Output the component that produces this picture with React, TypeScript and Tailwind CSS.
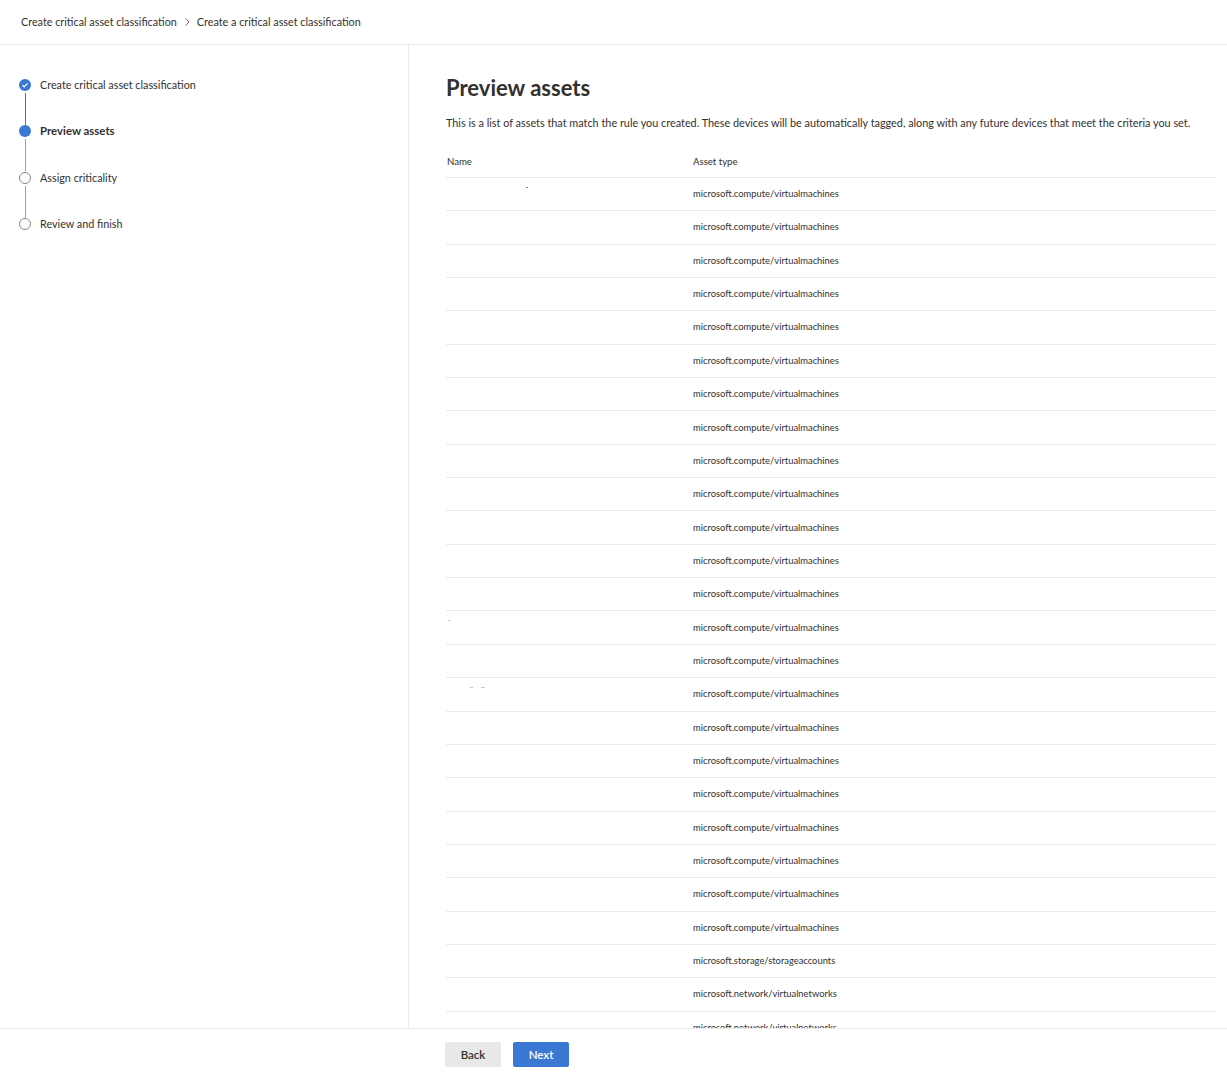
import React from "react";

const rows: string[] = [
  ...Array(23).fill("microsoft.compute/virtualmachines"),
  "microsoft.storage/storageaccounts",
  "microsoft.network/virtualnetworks",
  "microsoft.network/virtualnetworks",
];

function Step({ state, label, line }: { state: "done" | "current" | "todo"; label: string; line?: "blue" | "gray" }) {
  return (
    <div className="relative flex items-start h-[46.3px]">
      <div className="w-[12px] h-[12px] ml-[19px] mt-[1px] flex items-center justify-center shrink-0">
        {state === "done" && (
          <div className="w-[12px] h-[12px] rounded-full bg-[#3b78d4] flex items-center justify-center">
            <svg width="8" height="8" viewBox="0 0 8 8" fill="none">
              <path d="M1.5 4.2 L3.2 5.8 L6.5 2.3" stroke="white" strokeWidth="1.2" />
            </svg>
          </div>
        )}
        {state === "current" && <div className="w-[12px] h-[12px] rounded-full bg-[#3b78d4]" />}
        {state === "todo" && <div className="w-[12px] h-[12px] rounded-full border border-[#8a8886] bg-white" />}
      </div>
      <span className={"ml-[9px] leading-[14px] text-[#323130] " + (state === "current" ? "font-bold text-[11.4px]" : "text-[10.8px]")}>{label}</span>
      {line && (
        <div className={"absolute left-[24.5px] top-[15px] w-[1px] h-[32px] " + (line === "blue" ? "bg-[#3b78d4]" : "bg-[#a19f9d]")} />
      )}
    </div>
  );
}

export default function App() {
  return (
    <div className="h-[1072px] w-[1227px] flex flex-col bg-white text-[#323130] overflow-hidden" style={{ fontFamily: 'Lato, "Open Sans", sans-serif' }}>
      <div className="h-[45px] shrink-0 border-b border-[#edebe9] flex items-center pl-[21px] text-[10.8px] text-[#323130]">
        <span>Create critical asset classification</span>
        <svg className="mx-[6px]" width="8" height="10" viewBox="0 0 8 10" fill="none">
          <path d="M2.5 1.5 L6 5 L2.5 8.5" stroke="#605e5c" strokeWidth="0.9" />
        </svg>
        <span>Create a critical asset classification</span>
      </div>
      <div className="flex flex-1 min-h-0">
        <div className="w-[409px] shrink-0 border-r border-[#edebe9] pt-[33px]">
          <Step state="done" label="Create critical asset classification" line="blue" />
          <Step state="current" label="Preview assets" line="gray" />
          <Step state="todo" label="Assign criticality" line="gray" />
          <Step state="todo" label="Review and finish" />
        </div>
        <div className="flex-1 min-w-0 overflow-hidden pl-[37px] pr-[11px] pt-[28px]">
          <h1 className="text-[22px] leading-[30px] font-bold text-[#323130]">Preview assets</h1>
          <p className="mt-[12px] text-[10.85px] leading-[16px] text-[#323130] whitespace-nowrap">
            This is a list of assets that match the rule you created. These devices will be automatically tagged, along with any future devices that meet the criteria you set.
          </p>
          <div className="mt-[22px]">
            <div className="flex h-[25px] border-b border-[#edebe9] text-[9.6px] text-[#323130] items-start pt-[2px]">
              <div className="w-[247px] pl-[1px]">Name</div>
              <div>Asset type</div>
            </div>
            {rows.map((r, i) => (
              <div key={i} className="relative flex h-[33.35px] items-center border-b border-[#edebe9] text-[9.4px] text-[#323130]">
                <div className="w-[247px] relative h-full">
                  {i === 0 && <span className="absolute left-[80px] top-[9px] w-[2px] h-[1px] bg-[#8a8886]" />}
                  {i === 13 && <span className="absolute left-[2px] top-[9px] w-[2px] h-[1px] bg-[#c8c6c4]" />}
                  {i === 15 && (
                    <>
                      <span className="absolute left-[24px] top-[9px] w-[3px] h-[1px] bg-[#c8c6c4]" />
                      <span className="absolute left-[35px] top-[9px] w-[4px] h-[1px] bg-[#c8c6c4]" />
                    </>
                  )}
                </div>
                <div>{r}</div>
              </div>
            ))}
          </div>
        </div>
      </div>
      <div className="h-[44px] shrink-0 border-t border-[#edebe9] flex items-center pl-[445px] gap-[12px] bg-white">
        <button className="w-[56px] h-[25px] mt-[8px] bg-[#e8e8e8] text-[11.5px] font-semibold text-[#323130] rounded-[2px]">Back</button>
        <button className="w-[56px] h-[25px] mt-[8px] bg-[#3b78d4] text-[11.5px] font-semibold text-white rounded-[2px]">Next</button>
      </div>
    </div>
  );
}
